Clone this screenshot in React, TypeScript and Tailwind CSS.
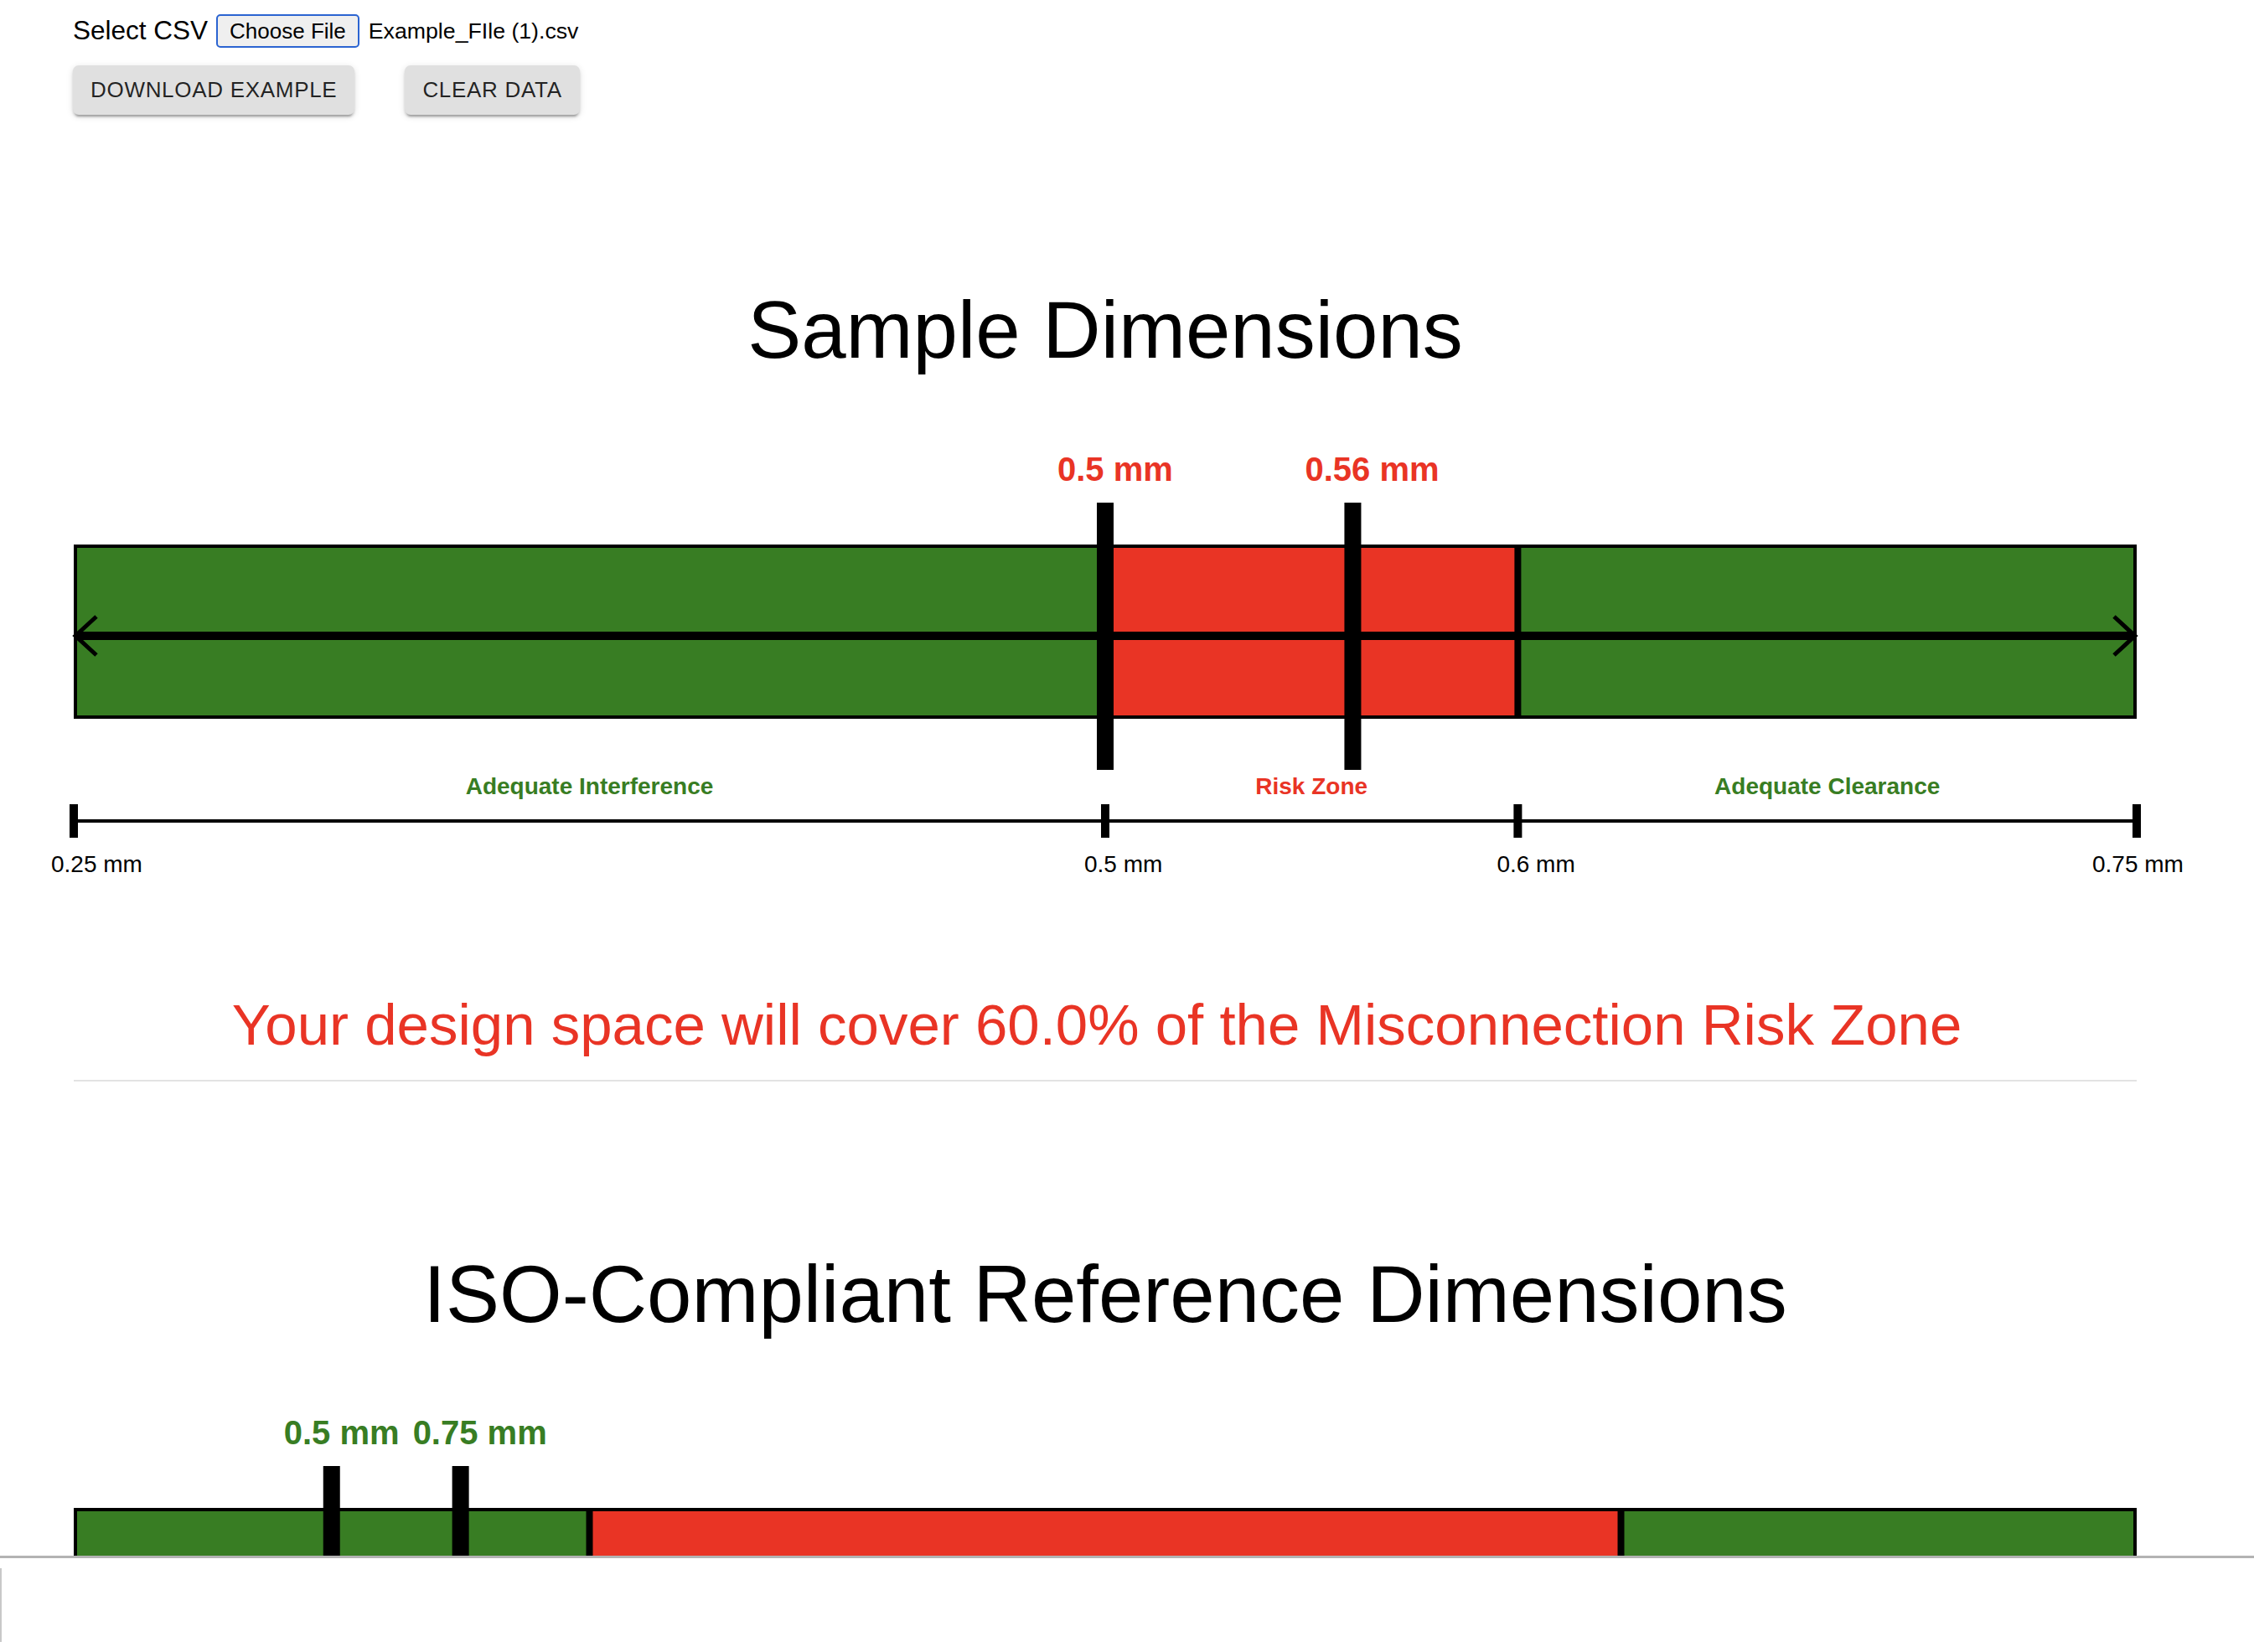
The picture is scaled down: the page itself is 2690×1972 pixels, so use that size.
import React from "react";

const GREEN = "#387d23";
const RED = "#e93425";
const CHART_W = 2462;

type Zone = { from: number; to: number; color: string; label: string };
type Marker = { value: number; label: string };

const DimensionChart = ({
  min,
  max,
  zones,
  markers,
  markerColor,
  ticks,
  height = 520,
}: {
  min: number;
  max: number;
  zones: Zone[];
  markers: Marker[];
  markerColor: string;
  ticks?: number[];
  height?: number;
}) => {
  const x = (v: number) => ((v - min) / (max - min)) * CHART_W;

  return (
    <svg width={CHART_W} height={height} className="block overflow-visible">
      {/* marker values */}
      {markers.map((m) => (
        <text
          key={"l" + m.value}
          x={x(m.value) - 57}
          y={34}
          fontSize={40}
          fontWeight={700}
          fill={markerColor}
        >
          {m.label}
        </text>
      ))}

      {/* bar */}
      <rect x={0} y={110} width={CHART_W} height={208} fill="#000" />
      {zones.map((z) => (
        <rect
          key={"z" + z.from}
          x={x(z.from) + 4}
          y={114}
          width={x(z.to) - x(z.from) - 8}
          height={200}
          fill={z.color}
        />
      ))}

      {/* double arrow */}
      <line x1={0} y1={219} x2={CHART_W} y2={219} stroke="#000" strokeWidth={10} />
      <polyline points="27,196 2,219 27,242" fill="none" stroke="#000" strokeWidth={5} />
      <polyline
        points={`${CHART_W - 27},196 ${CHART_W - 2},219 ${CHART_W - 27},242`}
        fill="none"
        stroke="#000"
        strokeWidth={5}
      />

      {/* markers */}
      {markers.map((m) => (
        <rect key={"m" + m.value} x={x(m.value) - 10} y={60} width={20} height={319} fill="#000" />
      ))}

      {ticks && (
        <>
          {/* zone names */}
          {zones.map((z) => (
            <text
              key={"n" + z.from}
              x={(x(z.from) + x(z.to)) / 2}
              y={408}
              fontSize={28}
              fontWeight={700}
              fill={z.color}
              textAnchor="middle"
            >
              {z.label}
            </text>
          ))}

          {/* axis */}
          <rect x={0} y={438} width={CHART_W} height={4} fill="#000" />
          {ticks.map((t, i) => (
            <g key={"t" + t}>
              <rect x={x(t) - 5} y={420} width={10} height={40} fill="#000" />
              <text
                x={x(t) - (i === ticks.length - 1 ? 53 : i === 0 ? 27 : 25)}
                y={501}
                fontSize={28}
                fill="#000"
              >
                {t} mm
              </text>
            </g>
          ))}
        </>
      )}
    </svg>
  );
};

const ActionButton = ({ children }: { children: React.ReactNode }) => (
  <button className="h-[59px] px-[21px] rounded-[7px] bg-[#e0e0e0] text-[26px] uppercase tracking-[0.7px] text-black/85 shadow-[0_5px_2px_-3px_rgba(0,0,0,0.2),0_3px_3px_0_rgba(0,0,0,0.14),0_2px_9px_0_rgba(0,0,0,0.12)]">
    {children}
  </button>
);

const App = () => {
  return (
    <div className="h-[1972px] w-full bg-white flex flex-col font-['Liberation_Sans',Arial,sans-serif] text-black">
      <div className="h-[1860px] shrink-0 overflow-hidden border-b-[3px] border-[#b3b3b3]">
        {/* File controls */}
        <div className="ml-[87px] mt-[17px] flex items-center h-[40px]">
          <span className="text-[31.5px] leading-none">Select CSV</span>
          <button className="ml-[10px] h-[40px] px-[14px] rounded-[5px] border-2 border-[#2b64d1] bg-[#efefef] text-[26px] leading-none">
            Choose File
          </button>
          <span className="ml-[11px] text-[26.7px] leading-none">Example_FIle (1).csv</span>
        </div>
        <div className="ml-[87px] mt-[21px] flex gap-[60px]">
          <ActionButton>Download Example</ActionButton>
          <ActionButton>Clear Data</ActionButton>
        </div>

        <div className="ml-[88px] w-[2462px]">
          {/* Sample */}
          <h2 className="mt-[202px] text-center text-[96px] leading-[110px]">Sample Dimensions</h2>
          <div className="mt-[91px]">
            <DimensionChart
              min={0.25}
              max={0.75}
              markerColor={RED}
              markers={[
                { value: 0.5, label: "0.5 mm" },
                { value: 0.56, label: "0.56 mm" },
              ]}
              zones={[
                { from: 0.25, to: 0.5, color: GREEN, label: "Adequate Interference" },
                { from: 0.5, to: 0.6, color: RED, label: "Risk Zone" },
                { from: 0.6, to: 0.75, color: GREEN, label: "Adequate Clearance" },
              ]}
              ticks={[0.25, 0.5, 0.6, 0.75]}
            />
          </div>

          <p className="mt-[124px] pr-[20px] text-center text-[69px] leading-[80px] text-[#e93425]">
            Your design space will cover 60.0% of the Misconnection Risk Zone
          </p>
          <div className="mt-[25px] h-[2px] bg-[#e3e3e3]" />

          {/* ISO reference */}
          <h2 className="mt-[199px] text-center text-[96px] leading-[110px]">
            ISO-Compliant Reference Dimensions
          </h2>
          <div className="mt-[90px]">
            <DimensionChart
              min={0}
              max={4}
              height={330}
              markerColor={GREEN}
              markers={[
                { value: 0.5, label: "0.5 mm" },
                { value: 0.75, label: "0.75 mm" },
              ]}
              zones={[
                { from: 0, to: 1, color: GREEN, label: "Adequate Interference" },
                { from: 1, to: 3, color: RED, label: "Risk Zone" },
                { from: 3, to: 4, color: GREEN, label: "Adequate Clearance" },
              ]}
            />
          </div>
        </div>
      </div>

      <div className="flex-1 pt-[12px]">
        <div className="h-[88px] w-[400px] border-l-2 border-[#c8c8c8]" />
      </div>
    </div>
  );
};

export default App;
